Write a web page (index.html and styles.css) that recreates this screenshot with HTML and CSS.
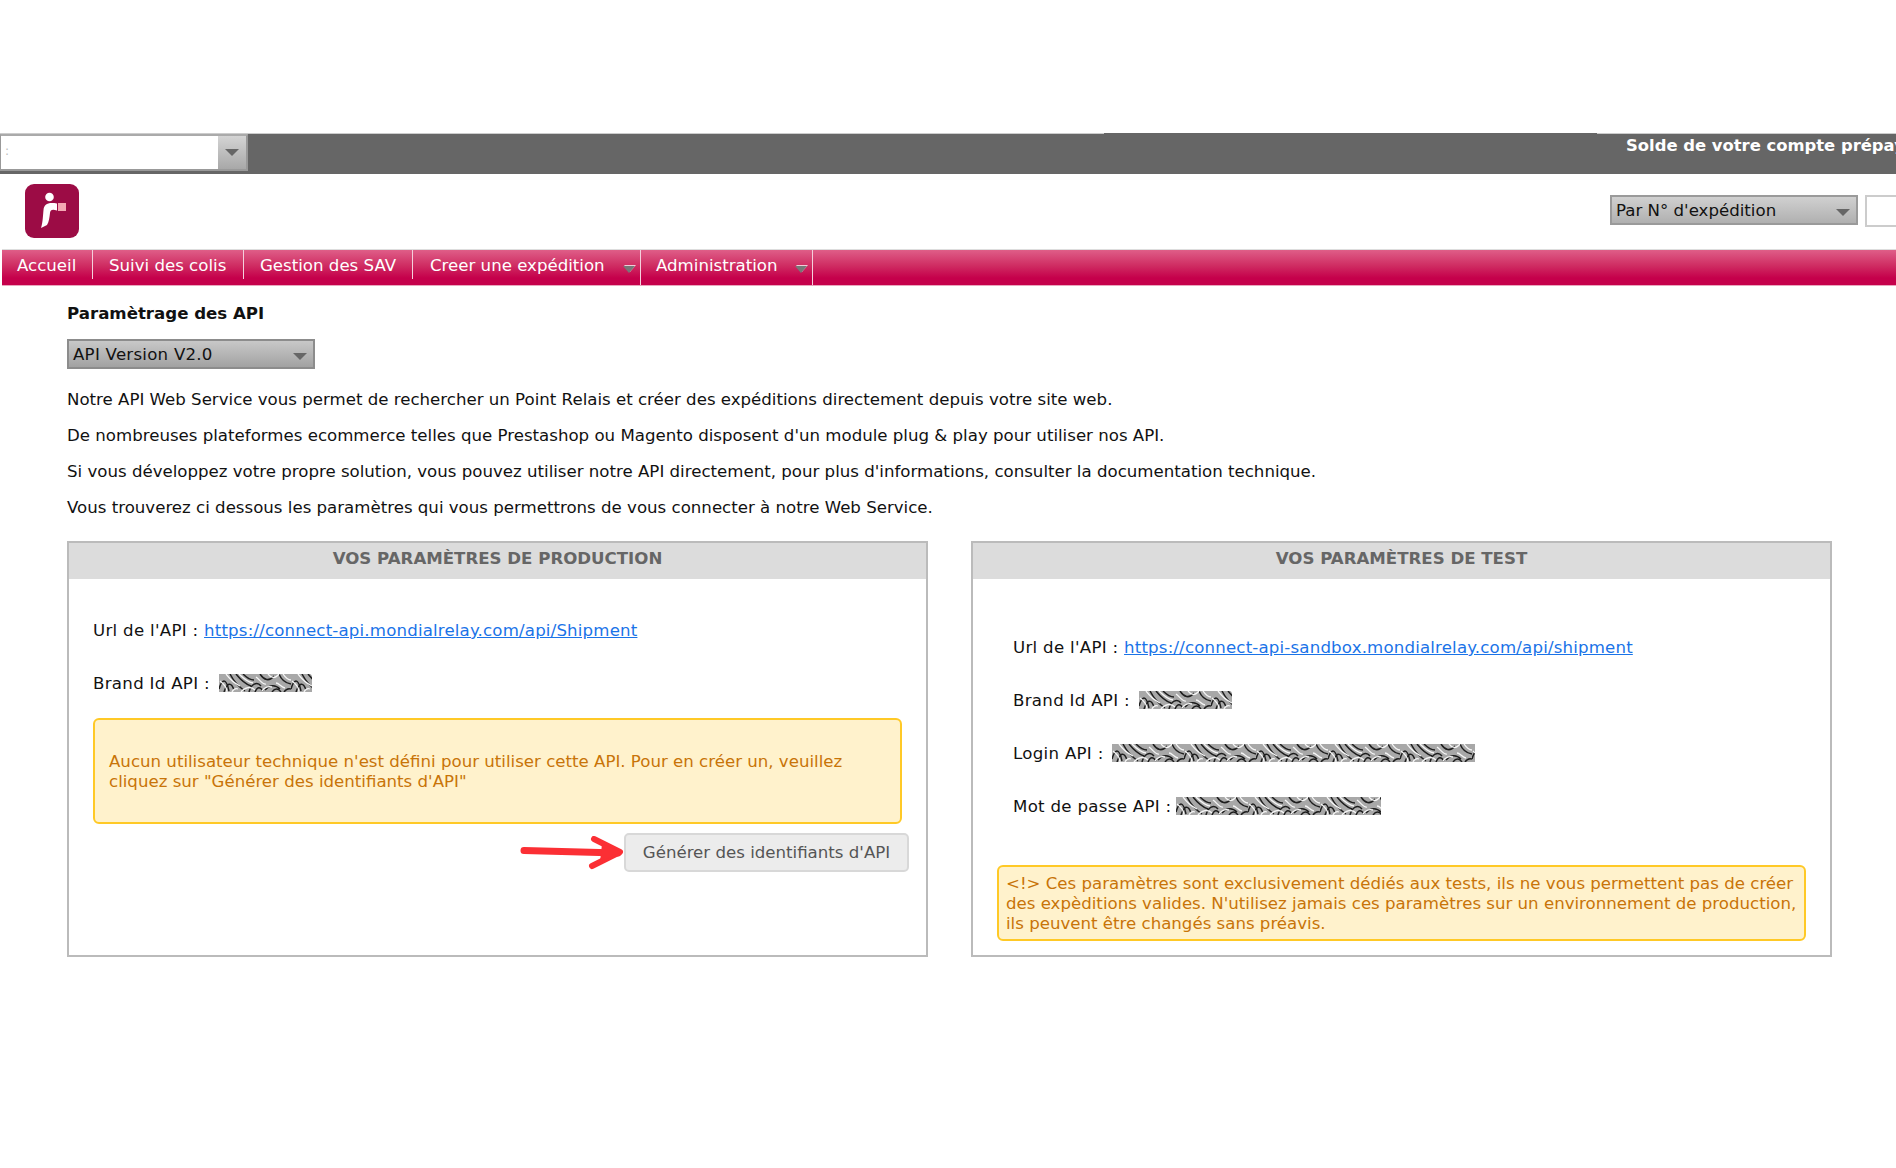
FILE: index.html
```html
<!DOCTYPE html>
<html lang="fr">
<head>
<meta charset="utf-8">
<title>Paramétrage des API</title>
<link rel="stylesheet" href="styles.css">
</head>
<body>
<svg class="defs" width="0" height="0" aria-hidden="true">
  <defs>
    <pattern id="blur" width="72" height="18" patternUnits="userSpaceOnUse">
      <rect width="72" height="18" fill="#a8a8a8"/>
      <g fill="none" stroke="#1e1e1e" stroke-width="1.500">
        <path d="M0 15C3 5 7 3 10 17M5 18C8 9 12 7 15 16M11 0C14 6 20 13 26 17M17 0C21 5 26 10 32 12M24 0C27 3 30 6 35 6"/>
        <path d="M30 18C32 10 38 7 42 12M36 18C38 13 41 12 44 17M41 0C45 6 50 8 55 2M46 16C50 11 56 10 61 15M53 18C56 14 59 14 62 18M60 0C62 5 66 9 72 10M65 18C67 15 69 14 72 15"/>
      </g>
      <g fill="none" stroke="#f6f6f6" stroke-width="1.300">
        <path d="M1 7C5 10 8 13 8 18M7 0C10 4 15 9 21 12M20 0C24 4 28 8 34 9M22 18C26 13 32 12 36 16M13 18C14 16 16 14 19 15"/>
        <path d="M37 3C41 6 44 11 47 10M43 17C46 13 49 12 53 13M49 0C52 4 56 5 60 0M57 9C60 9 62 13 66 14M64 0C66 3 68 6 72 6"/>
      </g>
    </pattern>
  </defs>
</svg>

<div class="topbar">
  <div class="topbar-seg"></div>
  <div class="combo">
    <div class="combo-field"><span class="combo-mark">:</span></div>
    <div class="combo-btn"><i class="tri"></i></div>
  </div>
  <div class="solde">Solde de votre compte prépayé</div>
</div>

<header class="header">
  <svg class="logo" viewBox="0 0 54 54" width="54" height="54" aria-label="Mondial Relay">
    <rect width="54" height="54" rx="9" fill="#9c0c45"/>
    <circle cx="24.500" cy="13" r="4.300" fill="#fff"/>
    <rect x="33" y="19" width="8" height="8" fill="#f4a9b4"/>
    <path d="M16 44C18 38 18 30 18.500 26C19 20 23 18 32 19.500L32 26.500C27 25 25.500 26 25 29C24.500 33 24 38 22 41Z" fill="#fff"/>
  </svg>
  <div class="search">
    <div class="select select-search">Par N° d'expédition<i class="tri"></i></div>
    <div class="search-input"></div>
  </div>
</header>

<nav class="nav">
  <a class="nav-item item-home">Accueil</a>
  <a class="nav-item item-track">Suivi des colis</a>
  <a class="nav-item item-sav">Gestion des SAV</a>
  <a class="nav-item has-sub item-create">Creer une expédition<i class="tri"></i></a>
  <a class="nav-item has-sub item-admin">Administration<i class="tri"></i></a>
</nav>

<main class="main">
  <h1 class="title">Paramètrage des API</h1>
  <div class="select select-api">API Version V2.0<i class="tri"></i></div>
  <p class="para">Notre API Web Service vous permet de rechercher un Point Relais et créer des expéditions directement depuis votre site web.</p>
  <p class="para">De nombreuses plateformes ecommerce telles que Prestashop ou Magento disposent d'un module plug &amp; play pour utiliser nos API.</p>
  <p class="para">Si vous développez votre propre solution, vous pouvez utiliser notre API directement, pour plus d'informations, consulter la documentation technique.</p>
  <p class="para">Vous trouverez ci dessous les paramètres qui vous permettrons de vous connecter à notre Web Service.</p>

  <div class="panels">
    <section class="panel">
      <h2 class="panel-head">VOS PARAMÈTRES DE PRODUCTION</h2>
      <div class="panel-body body-prod">
        <div class="field">Url de l'API : <a class="link" href="#">https://connect-api.mondialrelay.com/api/Shipment</a></div>
        <div class="field">Brand Id API : <svg class="redact r-brand"><rect width="100%" height="100%" fill="url(#blur)"/></svg></div>
        <div class="alert alert-tall">Aucun utilisateur technique n'est défini pour utiliser cette API. Pour en créer un, veuillez cliquez sur "Générer des identifiants d'API"</div>
        <div class="action">
          <svg class="arrow" viewBox="0 0 104 34" width="104" height="34" aria-hidden="true">
            <path d="M4 14.500L98 17" fill="none" stroke="#fb2f34" stroke-width="7" stroke-linecap="round"/>
            <path d="M74 3L100 16L72 30" fill="none" stroke="#fb2f34" stroke-width="6" stroke-linecap="round" stroke-linejoin="round"/>
            <path d="M82 8L102 16L80 26Z" fill="#fb2f34"/>
          </svg>
          <button class="btn" type="button">Générer des identifiants d'API</button>
        </div>
      </div>
    </section>

    <section class="panel">
      <h2 class="panel-head">VOS PARAMÈTRES DE TEST</h2>
      <div class="panel-body body-test">
        <div class="field">Url de l'API : <a class="link" href="#">https://connect-api-sandbox.mondialrelay.com/api/shipment</a></div>
        <div class="field">Brand Id API : <svg class="redact r-brand"><rect width="100%" height="100%" fill="url(#blur)"/></svg></div>
        <div class="field">Login API : <svg class="redact r-login"><rect width="100%" height="100%" fill="url(#blur)"/></svg></div>
        <div class="field">Mot de passe API : <svg class="redact r-pass"><rect width="100%" height="100%" fill="url(#blur)"/></svg></div>
        <div class="alert alert-test">&lt;!&gt; Ces paramètres sont exclusivement dédiés aux tests, ils ne vous permettent pas de créer des expèditions valides. N'utilisez jamais ces paramètres sur un environnement de production, ils peuvent être changés sans préavis.</div>
      </div>
    </section>
  </div>
</main>
</body>
</html>
```
FILE: styles.css
```css
* { box-sizing: border-box; }
html, body { margin: 0; height: 100%; overflow: hidden; }
body {
  width: 1896px;
  height: 1168px;
  padding-top: 133px;
  background: #fff;
  color: #111;
  font-family: "DejaVu Sans", Verdana, sans-serif;
  font-size: 16.62px;
}
.defs { display: block; height: 0; width: 0; position: absolute; }

.tri {
  display: block;
  width: 0;
  height: 0;
  border-left: 7px solid transparent;
  border-right: 7px solid transparent;
  border-top: 7px solid #666;
}

.topbar {
  position: relative;
  height: 41px;
  display: flex;
  align-items: flex-start;
  background: #666;
  border-top: 1px solid #ccc;
  white-space: nowrap;
  overflow: hidden;
}
.topbar-seg {
  position: fixed;
  top: 133px;
  left: 1104px;
  width: 493px;
  height: 1px;
  background: #666;
}
.combo {
  display: flex;
  height: 37px;
  width: 248px;
  flex: none;
  border: 2px solid #999;
  border-left-width: 1px;
  border-top-color: #aaa;
}
.combo-field { width: 217px; background: #fff; padding-left: 4px; line-height: 31px; font-size: 12px; color: #bbb; }
.combo-btn {
  flex: 1;
  display: flex;
  align-items: center;
  justify-content: center;
  background: linear-gradient(#d4d4d4, #a8a8a8);
}
.solde {
  margin-left: 1378px;
  padding-top: 1px;
  color: #fff;
  font-weight: 700;
  font-size: 16.4px;
  line-height: 22px;
}

.header {
  height: 75px;
  display: flex;
  align-items: flex-start;
  justify-content: space-between;
  padding: 10px 0 0 25px;
  overflow: hidden;
}
.logo { display: block; flex: none; }
.search { display: flex; gap: 7px; margin-top: 11px; margin-right: -69px; flex: none; }
.search-input { width: 100px; height: 32px; background: #fff; border: 2px solid #ccc; }

.select {
  display: flex;
  align-items: center;
  justify-content: space-between;
  height: 30px;
  padding: 0 6px 0 4px;
  border: 2px solid #8c8c8c;
  background: linear-gradient(#c8c8c8, #a2a2a2);
  color: #111;
  font-size: 16.62px;
}
.select .tri { margin-top: 4px; }
.select-search { width: 248px; border-color: #9a9a9a; background: linear-gradient(#d0d0d0, #b0b0b0); }
.select-api { width: 248px; margin: 0; letter-spacing: .25px; padding-top: 1px; }

.nav {
  height: 37px;
  margin-left: 2px;
  display: flex;
  align-items: stretch;
  border-top: 1px solid #ddd;
  background: linear-gradient(#df5e88 0, #cf2c62 45%, #c5004b 80%, #c5004b 100%);
  border-bottom: 1px solid #e9a6bd;
}
.nav-item {
  position: relative;
  display: flex;
  align-items: center;
  padding: 1px 0 0 15px;
  color: #fff;
  font-size: 16.62px;
  border-right: 1px solid #f4d0dc;
  margin-bottom: 6px;
  white-space: nowrap;
}
.item-home { width: 91px; }
.item-track { width: 151px; padding-left: 16px; }
.item-sav { width: 169px; padding-left: 16px; }
.has-sub { margin-bottom: 0; padding-bottom: 6px; padding-left: 17px; }
.has-sub .tri {
  position: absolute;
  right: 5px;
  top: 16px;
  border-left-width: 6px;
  border-right-width: 6px;
  border-top-color: #777;
  filter: drop-shadow(1px -1px 0 rgba(255, 255, 255, .75));
}
.item-create { width: 228px; }
.item-admin { width: 172px; padding-left: 15px; }

.main { padding: 0 65px 0 67px; }
.title {
  margin: 17px 0 14px;
  font-size: 16.62px;
  line-height: 22px;
  font-weight: 700;
}
.para {
  margin: 0;
  line-height: 36px;
}
.select-api + .para { margin-top: 13px; }

.panels {
  margin-top: 15px;
  display: grid;
  grid-template-columns: 861px 861px;
  gap: 43px;
}
.panel {
  height: 416px;
  border: 2px solid #bbb;
  display: flex;
  flex-direction: column;
}
.panel-head {
  margin: 0;
  height: 36px;
  line-height: 31px;
  background: #dcdcdc;
  color: #666;
  font-size: 16.62px;
  font-weight: 700;
  text-align: center;
}
.panel-body { flex: 1; padding: 0 24px; }
.body-prod { padding-top: 40px; }
.body-test { padding-top: 57px; }
.field { height: 53px; line-height: 24px; white-space: nowrap; letter-spacing: .3px; }
.body-test .field { padding-left: 16px; }
.link { color: #1a73e8; text-decoration: underline; letter-spacing: .17px; }
.redact { display: inline-block; height: 18px; vertical-align: -3px; }
.r-brand { width: 93px; margin-left: 4px; }
.r-login { width: 363px; margin-left: 3px; }
.r-pass { width: 205px; margin-left: -1px; }

.alert {
  background: #fff2cc;
  border: 2px solid #ffc926;
  border-radius: 6px;
  color: #c87408;
  line-height: 20px;
  padding: 0 7px;
}
.alert-tall {
  height: 106px;
  margin-top: -7px;
  padding: 32px 14px 0;
}
.alert-test {
  height: 76px;
  margin-top: 17px;
  padding-top: 7px;
}
.action {
  display: flex;
  justify-content: flex-end;
  align-items: center;
  margin: 9px -7px 0 0;
}
.arrow { display: block; flex: none; }
.btn {
  width: 285px;
  height: 39px;
  padding: 0;
  border: 2px solid #d8d8d8;
  border-radius: 5px;
  background: #ececec;
  color: #555;
  font-family: inherit;
  font-size: 16.62px;
}
```
